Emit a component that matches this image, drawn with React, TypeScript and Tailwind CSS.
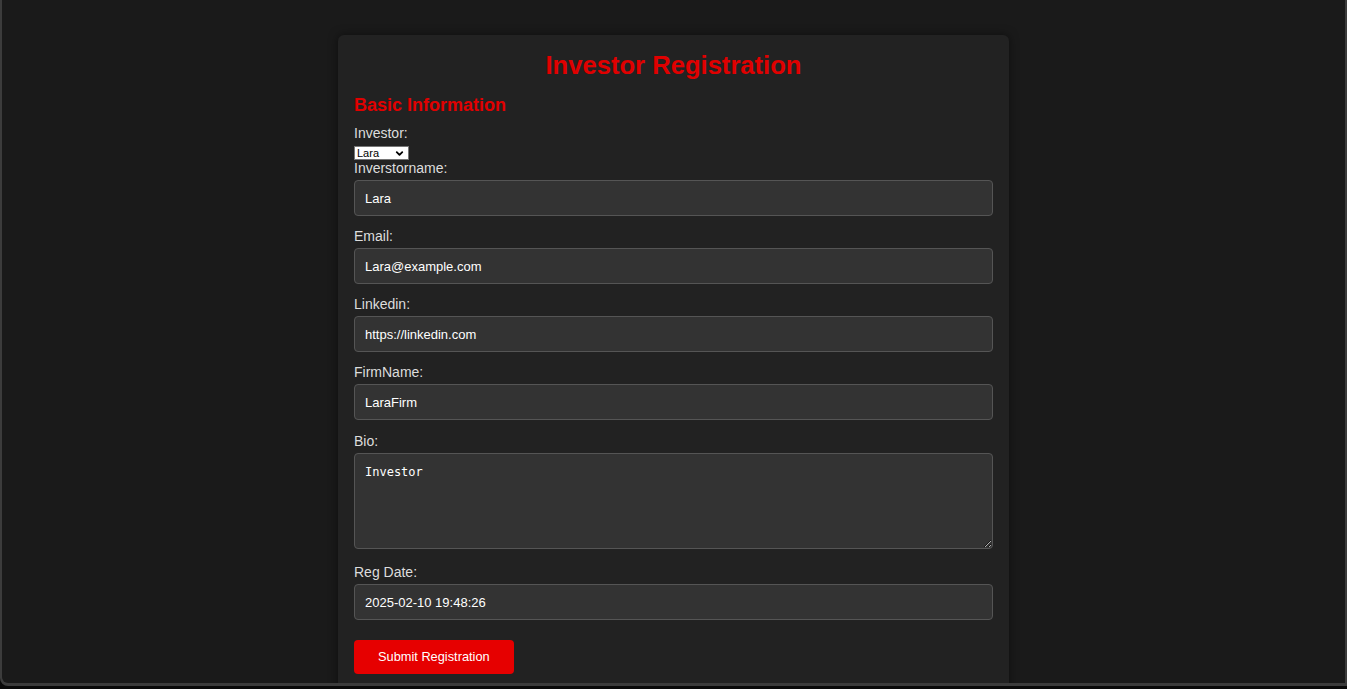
import { ChevronDown } from 'lucide-react';

const fields = [
  { label: 'Inverstorname:', value: 'Lara' },
  { label: 'Email:', value: 'Lara@example.com' },
  { label: 'Linkedin:', value: 'https://linkedin.com' },
  { label: 'FirmName:', value: 'LaraFirm' },
];

function Field({ label, value, last }: { label: string; value: string; last?: boolean }) {
  return (
    <div className={last ? 'mb-[13px]' : 'mb-3'}>
      <label className="block text-[14px] leading-4 text-[#dddddd] mb-1">{label}</label>
      <input
        readOnly
        value={value}
        className="block w-full h-9 px-[10px] text-[13px] text-white bg-[#333333] border border-[#555555] rounded-[4px] outline-none"
      />
    </div>
  );
}

export default function App() {
  return (
    <div className="h-[689px] w-full bg-[#0a0a0a] overflow-hidden font-['Liberation_Sans',Arial,sans-serif]">
      <div className="h-[686px] bg-[#3c3c3c] pl-[2px] pr-[2px] pb-[3px] rounded-bl-[8px] overflow-hidden">
        <div className="h-full bg-[#1a1a1a] rounded-bl-[6px] overflow-hidden pt-[35px]">
          <div className="w-[671px] mx-auto bg-[#222222] rounded-[6px] shadow-[0_0_10px_rgba(0,0,0,0.5)] px-4 pt-[15px] pb-6">
            <h1 className="text-center text-[25.6px] leading-[30px] font-bold text-[#e00000] mb-[15px]">
              Investor Registration
            </h1>
            <h3 className="text-[18px] leading-[21px] font-bold text-[#e00000] mb-[9px]">
              Basic Information
            </h3>
            <label className="block text-[14px] leading-4 text-[#dddddd] mb-[5px]">Investor:</label>
            <div className="relative w-[55px] h-[14px] bg-white border border-[#767676] flex items-center">
              <span className="text-[11px] leading-none text-black pl-[2px]">Lara</span>
              <ChevronDown className="absolute right-[3px] top-[1px] w-[11px] h-[11px] text-black" strokeWidth={4} />
            </div>
            <div>
              {fields.map((f, i) => (
                <Field key={f.label} label={f.label} value={f.value} last={i === fields.length - 1} />
              ))}
            </div>
            <div className="mb-[15px]">
              <label className="block text-[14px] leading-4 text-[#dddddd] mb-1">Bio:</label>
              <textarea
                readOnly
                value="Investor"
                className="block w-full h-24 p-[10px] text-[12px] leading-[16px] text-white bg-[#333333] border border-[#555555] rounded-[4px] outline-none resize-y font-['DejaVu_Sans_Mono',monospace]"
              />
            </div>
            <div className="mb-5">
              <label className="block text-[14px] leading-4 text-[#dddddd] mb-1">Reg Date:</label>
              <input
                readOnly
                value="2025-02-10 19:48:26"
                className="block w-full h-9 px-[10px] text-[13px] text-white bg-[#333333] border border-[#555555] rounded-[4px] outline-none"
              />
            </div>
            <button className="h-[34px] px-6 bg-[#e60000] text-white text-[12.8px] rounded-[4px]">
              Submit Registration
            </button>
          </div>
        </div>
      </div>
    </div>
  );
}
